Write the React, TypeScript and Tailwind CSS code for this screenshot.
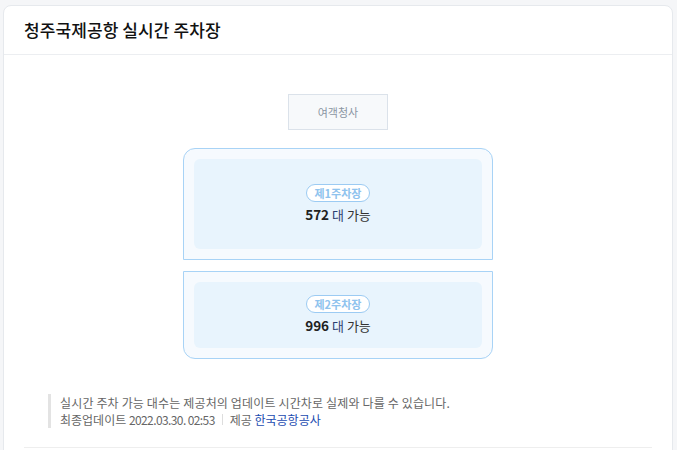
export default function App() {
  const lots = [
    { name: "제1주차장", count: 572, top: true },
    { name: "제2주차장", count: 996, top: false },
  ];

  return (
    <div
      className="w-[677px] h-[450px] overflow-hidden bg-[#f5f6f8] pt-[5px] pl-[3px] pr-[4px]"
      style={{ fontFamily: '"Noto Sans CJK KR", "Noto Sans", sans-serif' }}
    >
      <div className="h-[470px] bg-white rounded-lg border border-[#e6e9ed]">
        <div className="h-[49px] border-b border-[#eceef1] px-[20px] flex items-center">
          <h1 className="text-[17px] font-medium text-[#111] tracking-[0.1px]">청주국제공항 실시간 주차장</h1>
        </div>

        <div className="flex flex-col items-center pt-[39px]">
          <div className="w-[100px] h-[36px] bg-[#f7f9fb] border border-[#dbe2ea] flex items-center justify-center text-[11px] text-[#8b96a3]">
            여객청사
          </div>

          <div className="mt-[18px] flex flex-col gap-[11px]">
            {lots.map((lot) => (
              <div
                key={lot.name}
                className={
                  lot.top
                    ? "w-[310px] h-[112px] p-[10px] bg-[#f6fafe] border border-[#a8d3f6] rounded-t-[12px]"
                    : "w-[310px] h-[88px] p-[10px] bg-[#f6fafe] border border-[#a8d3f6] rounded-b-[12px]"
                }
              >
                <div className="h-full bg-[#e8f4fd] rounded-[6px] flex flex-col items-center justify-center gap-[3px]">
                  <span className="h-[18px] px-[8px] rounded-full border border-[#9ccbf3] bg-white text-[11px] font-bold text-[#8fc3ee] flex items-center leading-none">
                    {lot.name}
                  </span>
                  <p className="text-[13px] text-[#333] leading-[18px]">
                    <b className="font-bold text-[#222] text-[13.5px]">{lot.count}</b>{" "}
                    <span className="text-[#2c3e70]">대</span> 가능
                  </p>
                </div>
              </div>
            ))}
          </div>
        </div>

        <div className="mt-[35px] mx-[44px] border-l-[3px] border-[#e3e3e3] pl-[9px] text-[12px] text-[#666] leading-[17px]">
          <p className="tracking-[0.15px]">실시간 주차 가능 대수는 제공처의 업데이트 시간차로 실제와 다를 수 있습니다.</p>
          <p className="flex items-center">
            최종업데이트&nbsp;<span className="tracking-[-0.6px]">2022.03.30. 02:53</span>
            <span className="mx-[7px] w-px h-[11px] bg-[#ddd]" />
            제공&nbsp;<span className="text-[#1a4bb0]">한국공항공사</span>
          </p>
        </div>

        <div className="mt-[19px] mx-[20px] border-t border-[#eeeeee]" />
      </div>
    </div>
  );
}
